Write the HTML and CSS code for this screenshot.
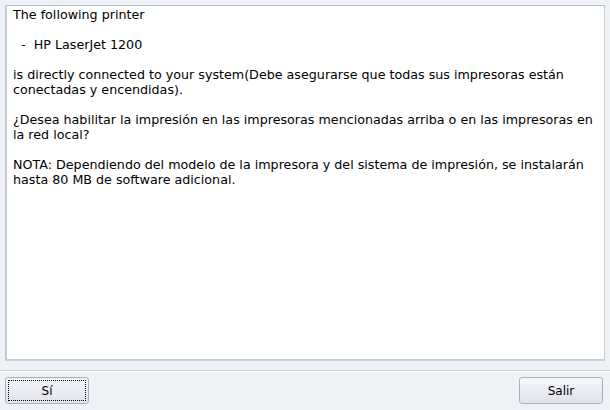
FILE: index.html
```html
<!DOCTYPE html>
<html>
<head>
<meta charset="utf-8">
<link rel="stylesheet" href="styles.css">
</head>
<body>
<div class="window">
  <div class="panel"><div class="text">The following printer

  -  HP LaserJet 1200

is directly connected to your system(Debe asegurarse que todas sus impresoras están
conectadas y encendidas).

¿Desea habilitar la impresión en las impresoras mencionadas arriba o en las impresoras en
la red local?

NOTA: Dependiendo del modelo de la impresora y del sistema de impresión, se instalarán
hasta 80 MB de software adicional.</div></div>
  <div class="separator"></div>
  <div class="buttons">
    <button class="btn focused"><span class="label">Sí</span></button>
    <button class="btn"><span class="label">Salir</span></button>
  </div>
</div>
</body>
</html>
```
FILE: styles.css
```css
html, body {
  margin: 0;
  padding: 0;
  width: 610px;
  height: 410px;
  background: #eef1f6;
  font-family: "DejaVu Sans", sans-serif;
  font-size: 12px;
  color: #000;
  overflow: hidden;
}
.window {
  display: flex;
  flex-direction: column;
  height: 410px;
  padding: 5px 5px 0 5px;
  box-sizing: border-box;
}
.panel {
  height: 356px;
  box-sizing: border-box;
  background: #fff;
  border-top: 1px solid #b9c1cc;
  border-left: 2px solid #c3cad4;
  border-right: 1px solid #c3cad4;
  border-bottom: 2px solid #c9d0da;
  padding: 1px 2px 0 6px;
}
.text {
  white-space: pre;
  font-size: 12.7px;
  line-height: 15px;
}
.separator {
  margin: 9px -5px 0 -5px;
  height: 1px;
  background: #c7ced8;
  border-bottom: 1px solid #fafbfd;
}
.buttons {
  display: flex;
  justify-content: space-between;
  margin-top: 5px;
  padding-right: 2px;
}
.btn {
  width: 84px;
  height: 27px;
  box-sizing: border-box;
  border: 1px solid #a9b1bd;
  border-radius: 3px;
  background: linear-gradient(#f6f7fa, #dfe3ea);
  font-family: "DejaVu Sans", sans-serif;
  font-size: 12px;
  color: #000;
  padding: 2px;
  display: flex;
}
.btn .label {
  flex: 1;
  display: flex;
  align-items: center;
  justify-content: center;
  border: 1px dotted transparent;
}
.btn.focused .label {
  border-color: #000;
}
```
